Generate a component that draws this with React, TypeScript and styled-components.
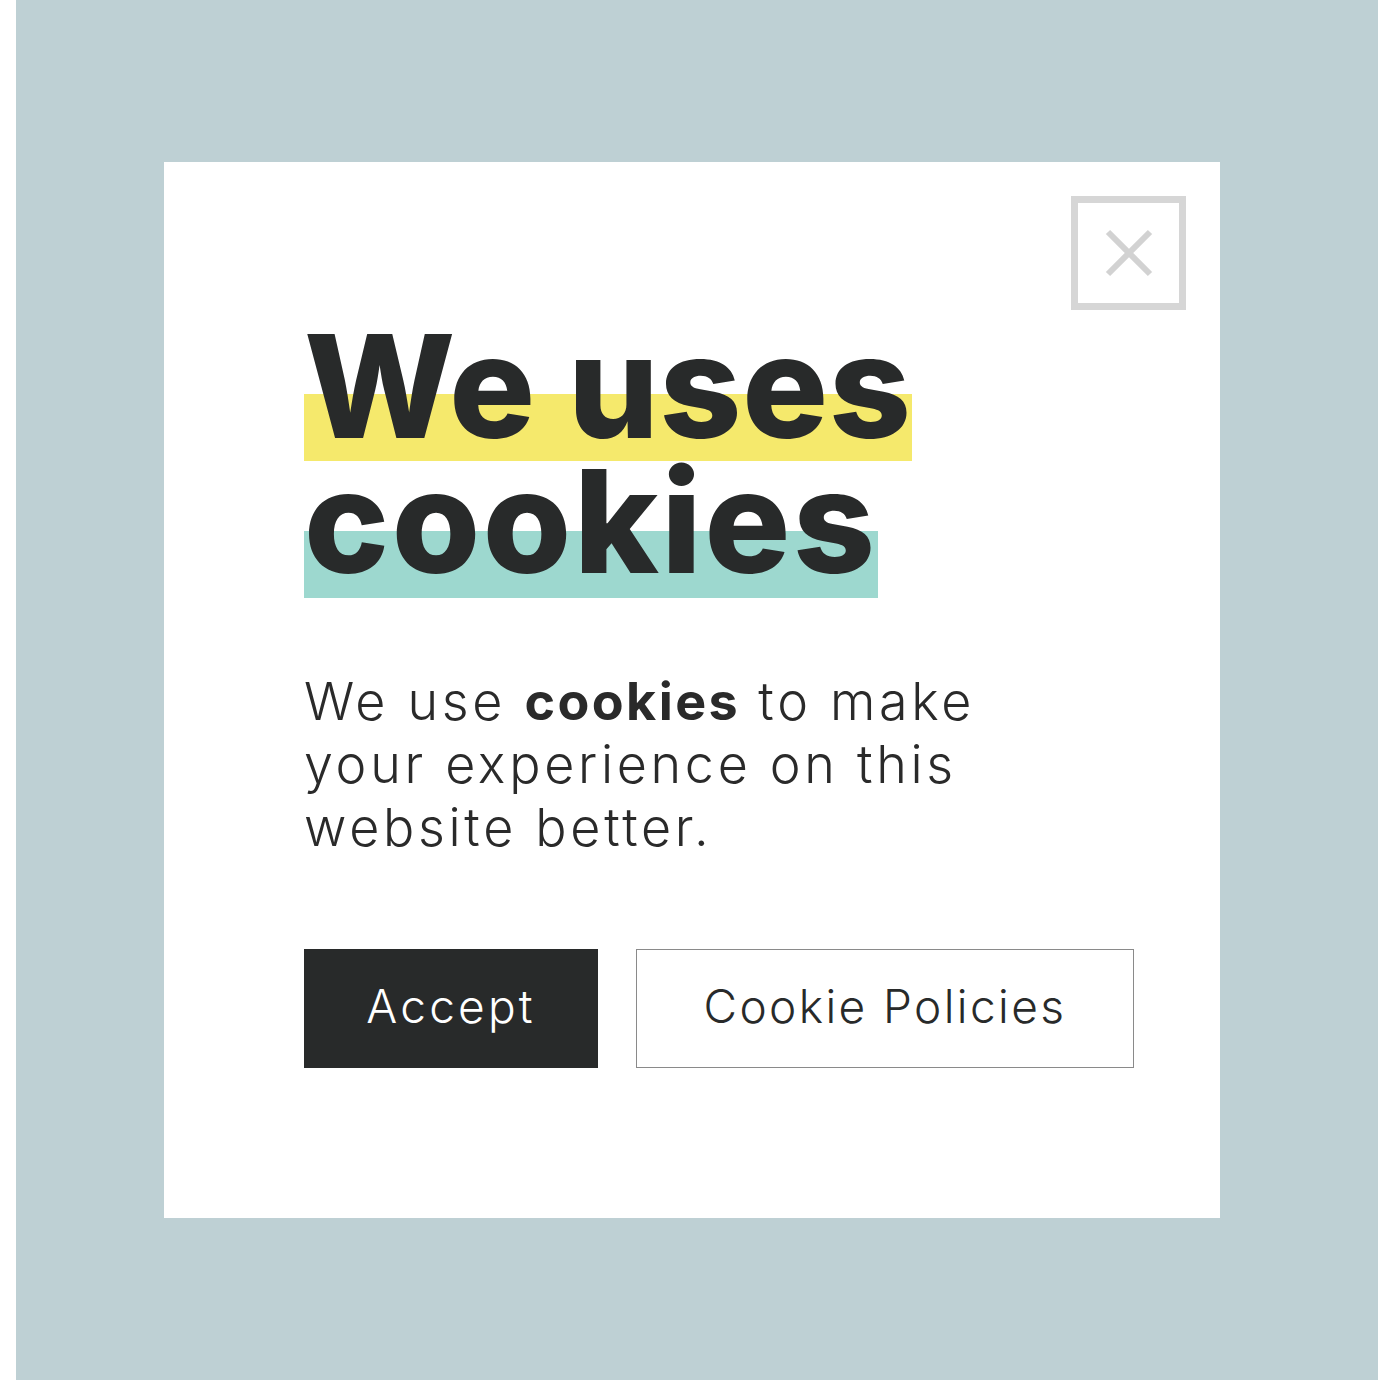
import React from 'react';
import styled, { createGlobalStyle } from 'styled-components';

const GlobalStyle = createGlobalStyle`
  html, body {
    margin: 0;
    padding: 0;
    background: #ffffff;
  }
  body {
    font-family: Inter, "Noto Sans", sans-serif;
    color: #282a2a;
  }
`;

const Page = styled.div`
  width: 1380px;
  height: 1380px;
  padding: 0 2px 0 16px;
  box-sizing: border-box;
  display: flex;
`;

const Backdrop = styled.div`
  flex: 1;
  background-color: #bed0d4;
  padding: 162px 158px 162px 148px;
  box-sizing: border-box;
`;

const Card = styled.div`
  width: 1056px;
  height: 1056px;
  background: #ffffff;
  box-sizing: border-box;
  padding: 34px 34px 0 140px;
  display: flex;
  flex-direction: column;
`;

const TopRow = styled.div`
  display: flex;
  justify-content: flex-end;
`;

const CloseButton = styled.button`
  width: 115px;
  height: 114px;
  border: 7px solid #d6d6d6;
  background: #ffffff;
  padding: 0;
  display: flex;
  align-items: center;
  justify-content: center;
  box-sizing: border-box;
  cursor: pointer;
`;

const Heading = styled.h1`
  margin: 8px 0 0;
  font-family: Inter, "Noto Sans", sans-serif;
  font-weight: 800;
  font-size: 143px;
  line-height: 135px;
  color: #282a2a;
  display: flex;
  flex-direction: column;
  align-items: flex-start;
`;

const HeadingLine = styled.span<{ $band: string; $offset: number; $extra: number; $spacing: number }>`
  display: block;
  letter-spacing: ${({ $spacing }) => $spacing}px;
  padding-bottom: ${({ $extra }) => $extra}px;
  margin-bottom: ${({ $extra }) => -$extra}px;
  background-image: linear-gradient(${({ $band }) => $band}, ${({ $band }) => $band});
  background-repeat: no-repeat;
  background-size: 100% 67px;
  background-position: 0 ${({ $offset }) => $offset}px;
`;

const Body = styled.p`
  margin: 82px 0 0;
  font-family: Inter, "Noto Sans", sans-serif;
  font-weight: 300;
  font-size: 52px;
  line-height: 63px;
  letter-spacing: 3.7px;
  color: #2a2a2a;
  width: 760px;

  strong {
    font-weight: 700;
    letter-spacing: 2.4px;
  }
`;

const Actions = styled.div`
  margin-top: 90px;
  display: flex;
  gap: 38px;
`;

const ActionButton = styled.button<{ $primary?: boolean; $width: number }>`
  width: ${({ $width }) => $width}px;
  height: 119px;
  box-sizing: border-box;
  border: ${({ $primary }) => ($primary ? 'none' : '1px solid #8a8a8a')};
  background: ${({ $primary }) => ($primary ? '#282a2a' : '#ffffff')};
  color: ${({ $primary }) => ($primary ? '#ffffff' : '#282a2a')};
  font-family: Inter, "Noto Sans", sans-serif;
  font-weight: 300;
  font-size: 46px;
  letter-spacing: ${({ $primary }) => ($primary ? '3.2px' : '2.4px')};
  padding: 0 0 6px;
  cursor: pointer;
`;

export default function App() {
  return (
    <>
      <GlobalStyle />
      <Page>
        <Backdrop>
          <Card>
            <TopRow>
              <CloseButton aria-label="Close">
                <svg width="50" height="50" viewBox="0 0 50 50">
                  <path d="M4 4 L46 46 M46 4 L4 46" stroke="#d2d2d2" strokeWidth="6" fill="none" />
                </svg>
              </CloseButton>
            </TopRow>
            <Heading>
              <HeadingLine $band="#f5e96c" $offset={76} $extra={8} $spacing={0.8}>We uses</HeadingLine>
              <HeadingLine $band="#9dd8cf" $offset={78} $extra={10} $spacing={2.6}>cookies</HeadingLine>
            </Heading>
            <Body>
              We use <strong>cookies</strong> to make your experience on this website better.
            </Body>
            <Actions>
              <ActionButton $primary $width={294}>Accept</ActionButton>
              <ActionButton $width={498}>Cookie Policies</ActionButton>
            </Actions>
          </Card>
        </Backdrop>
      </Page>
    </>
  );
}
